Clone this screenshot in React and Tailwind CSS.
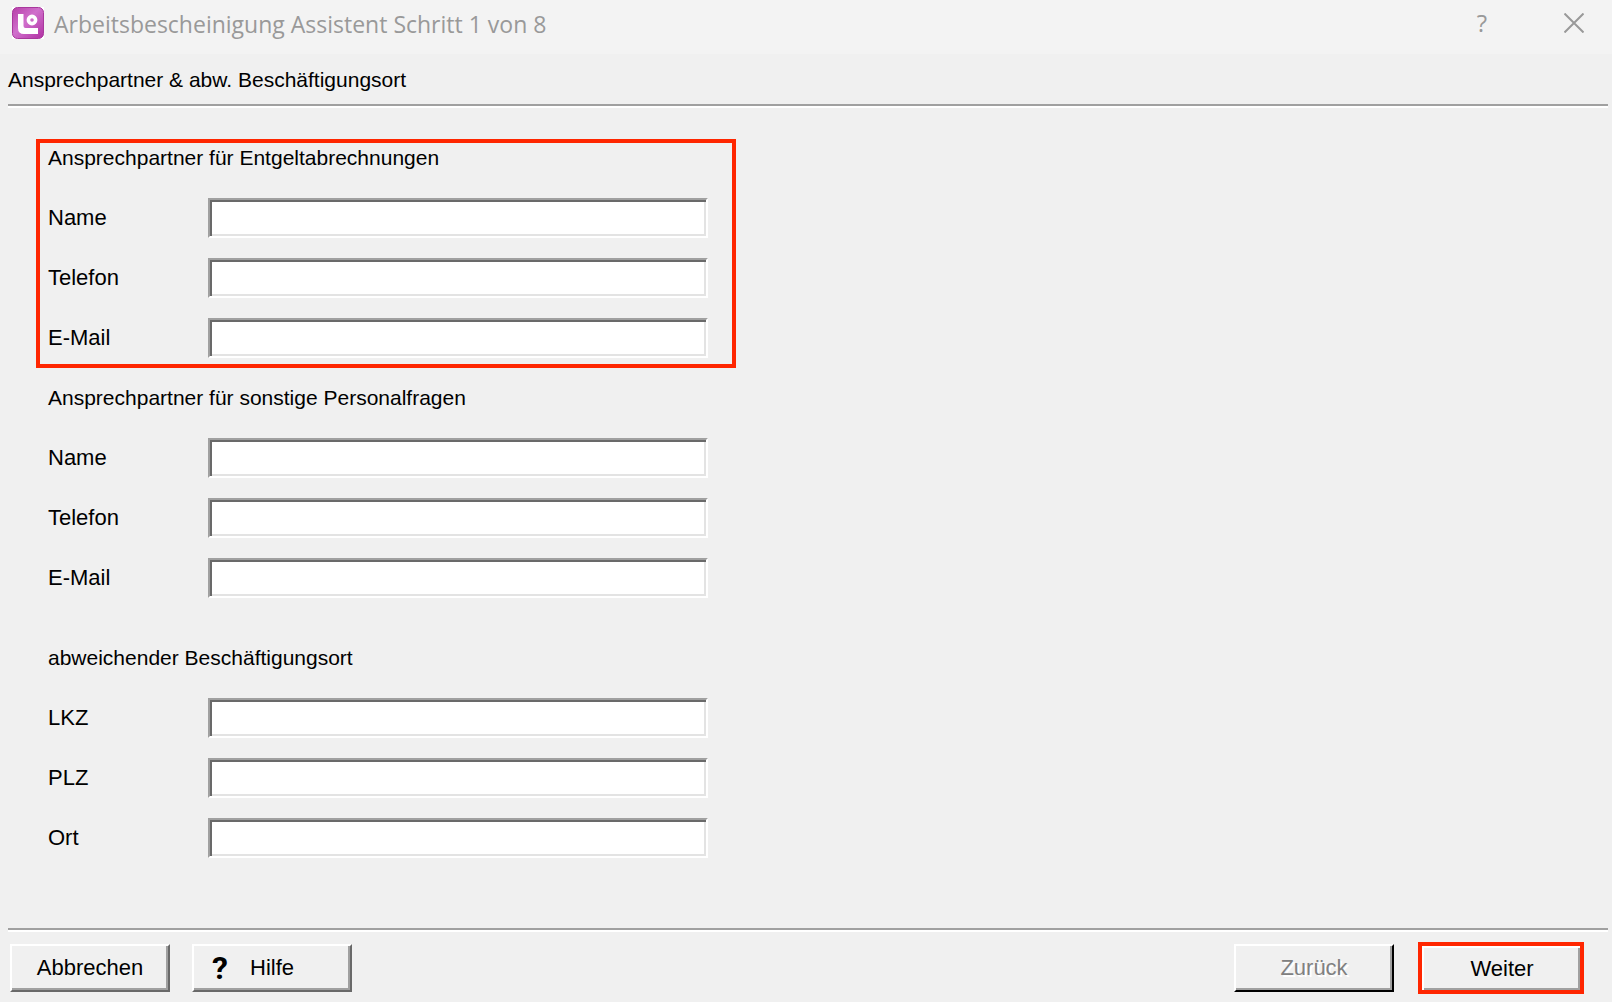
import { useState } from "react";

const groups = [
  {
    id: "entgelt",
    title: "Ansprechpartner für Entgeltabrechnungen",
    fields: ["Name", "Telefon", "E-Mail"],
    marked: true,
  },
  {
    id: "personal",
    title: "Ansprechpartner für sonstige Personalfragen",
    fields: ["Name", "Telefon", "E-Mail"],
  },
  {
    id: "ort",
    title: "abweichender Beschäftigungsort",
    fields: ["LKZ", "PLZ", "Ort"],
    spaced: true,
  },
];

function Logo() {
  return (
    <svg viewBox="0 0 32 32" className="w-8 h-8 shrink-0" aria-hidden="true">
      <defs>
        <linearGradient id="logo-bg" x1="0" y1="0" x2="1" y2="1">
          <stop offset="0" stopColor="#b63fa8" />
          <stop offset="0.45" stopColor="#d070cc" />
          <stop offset="1" stopColor="#b02fa2" />
        </linearGradient>
      </defs>
      <rect width="32" height="32" fill="#fff" />
      <rect x="0.5" y="0.5" width="31" height="31" rx="5" fill="url(#logo-bg)" stroke="#a8389c" />
      <path d="M6 7h5.500v12q0 2 2 2H26v6H12q-6 0-6-6z" fill="#fff" />
      <circle cx="20" cy="13" r="3.600" fill="none" stroke="#fff" strokeWidth="3.600" />
    </svg>
  );
}

function Divider() {
  return <hr className="ml-2 mr-1 h-1 border-0 border-t-2 border-t-[#a0a0a0] bg-white" />;
}

function Field({ id, label, value, onChange }) {
  return (
    <div className="flex items-center h-[60px]">
      <label htmlFor={id} className="w-40 shrink-0">
        {label}
      </label>
      <input
        id={id}
        name={id}
        type="text"
        value={value}
        onChange={onChange}
        className="w-[500px] h-10 px-2 bg-white border-2 border-t-[#a0a0a0] border-l-[#a0a0a0] border-r-white border-b-white shadow-[inset_2px_2px_0_#696969,inset_-2px_-2px_0_#e3e3e3] outline-none"
      />
    </div>
  );
}

export default function App() {
  const [form, setForm] = useState({});

  const handleChange = (e) => {
    setForm({ ...form, [e.target.name]: e.target.value });
  };

  return (
    <div className="min-h-screen flex flex-col bg-[#f0f0f0] text-black text-[22px] leading-7 font-['Liberation_Sans',Arial,sans-serif]">
      <header className="flex items-center h-[54px] pl-3 pr-7 pb-2 bg-[#f3f3f3] text-[#999999] font-['Open_Sans','Noto_Sans',sans-serif]">
        <Logo />
        <h1 className="ml-[10px] pt-[2px] text-[23px]">Arbeitsbescheinigung Assistent Schritt 1 von 8</h1>
        <button type="button" aria-label="Hilfe" className="ml-auto w-6 text-2xl">
          ?
        </button>
        <button type="button" aria-label="Schließen" className="ml-[70px]">
          <svg viewBox="0 0 20 20" className="w-5 h-5" fill="none" stroke="#999999" strokeWidth="2">
            <path d="M0.500 0.500l19 19M19.500 0.500l-19 19" />
          </svg>
        </button>
      </header>

      <h2 className="h-[50px] px-2 pt-3 text-[21px]">Ansprechpartner &amp; abw. Beschäftigungsort</h2>
      <Divider />

      <main className="px-9 pt-5">
        {groups.map((g) => (
          <section
            key={g.id}
            className={`relative w-[700px] pl-3 ${g.spaced ? "mt-5" : ""}`}
          >
            <h3 className="flex items-center h-[60px] text-[21px]">{g.title}</h3>
            {g.fields.map((label) => {
              const id = `${g.id}-${label}`;
              return (
                <Field
                  key={id}
                  id={id}
                  label={label}
                  value={form[id] || ""}
                  onChange={handleChange}
                />
              );
            })}
            {g.marked && (
              <div className="absolute inset-x-0 top-[11px] bottom-0 border-4 border-[#ff2600] pointer-events-none" />
            )}
          </section>
        ))}
      </main>

      <footer className="mt-auto">
        <Divider />
        <div className="flex items-center h-[70px] pl-[10px] pr-7 pt-[2px]">
          <button
            type="button"
            className="w-40 h-12 border-2 border-t-white border-l-white border-r-[#696969] border-b-[#696969] shadow-[inset_-2px_-2px_0_#a0a0a0]"
          >
            Abbrechen
          </button>
          <button
            type="button"
            className="flex items-center w-40 h-12 ml-[22px] pl-[18px] border-2 border-t-white border-l-white border-r-[#696969] border-b-[#696969] shadow-[inset_-2px_-2px_0_#a0a0a0]"
          >
            <span className="w-[38px] text-left text-[32px] font-bold font-[Roboto,sans-serif]" aria-hidden="true">
              ?
            </span>
            Hilfe
          </button>
          <button
            type="button"
            disabled
            className="w-40 h-12 ml-auto text-[#808080] [text-shadow:2px_2px_0_#fff] border-2 border-t-white border-l-white border-r-black border-b-black shadow-[inset_-2px_-2px_0_#a0a0a0]"
          >
            Zurück
          </button>
          <div className="ml-6 border-4 border-[#ff2600]">
            <button
              type="button"
              className="block w-[158px] h-11 border-t-2 border-l-2 border-white shadow-[inset_-2px_-2px_0_#a0a0a0]"
            >
              Weiter
            </button>
          </div>
        </div>
      </footer>
    </div>
  );
}
